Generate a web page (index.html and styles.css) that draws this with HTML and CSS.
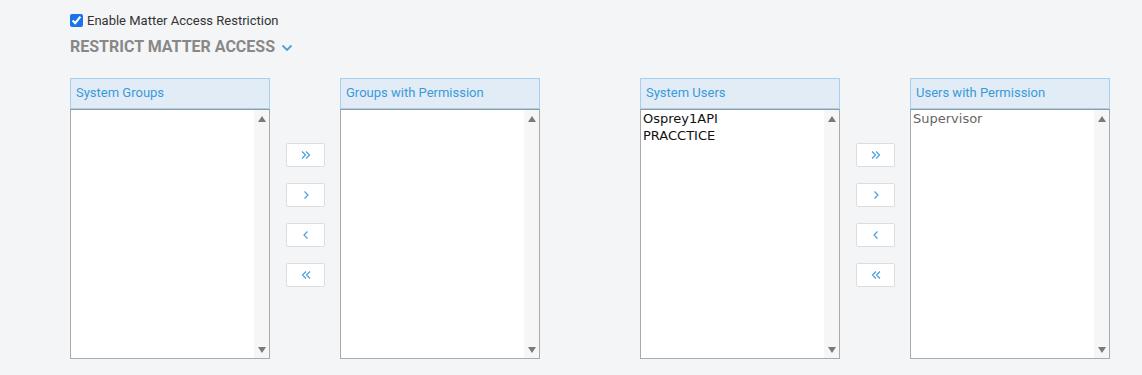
FILE: index.html
```html
<!DOCTYPE html>
<html lang="en">
<head>
    <meta charset="UTF-8">
    <title>Restrict Matter Access</title>
    <link rel="stylesheet" href="styles.css">
</head>
<body>
    <div class="page">
        <label class="enable-row">
            <input type="checkbox" checked>
            <span>Enable Matter Access Restriction</span>
        </label>

        <div class="section-title">
            RESTRICT MATTER ACCESS
            <svg class="chevron" width="12" height="8" viewBox="0 0 12 8"><path d="M1.5 1.5 L6 6 L10.5 1.5" fill="none" stroke="#4a9fdc" stroke-width="1.8"/></svg>
        </div>

        <div class="pickers">
            <div class="picker">
                <div class="list-panel">
                    <div class="list-header">System Groups</div>
                    <div class="list-body">
                        <ul class="items"></ul>
                        <div class="scroll"><span class="up"></span><span class="down"></span></div>
                    </div>
                </div>
                <div class="moves">
                    <button class="move"><svg width="14" height="12" viewBox="0 0 14 12"><path d="M3 2.5 L6.5 6 L3 9.5 M7 2.5 L10.5 6 L7 9.5" fill="none" stroke="#4a9fdc" stroke-width="1.2"/></svg></button>
                    <button class="move"><svg width="14" height="12" viewBox="0 0 14 12"><path d="M5.5 2.5 L9 6 L5.5 9.5" fill="none" stroke="#4a9fdc" stroke-width="1.2"/></svg></button>
                    <button class="move"><svg width="14" height="12" viewBox="0 0 14 12"><path d="M8.5 2.5 L5 6 L8.5 9.5" fill="none" stroke="#4a9fdc" stroke-width="1.2"/></svg></button>
                    <button class="move"><svg width="14" height="12" viewBox="0 0 14 12"><path d="M7 2.5 L3.5 6 L7 9.5 M11 2.5 L7.5 6 L11 9.5" fill="none" stroke="#4a9fdc" stroke-width="1.2"/></svg></button>
                </div>
                <div class="list-panel">
                    <div class="list-header">Groups with Permission</div>
                    <div class="list-body">
                        <ul class="items"></ul>
                        <div class="scroll"><span class="up"></span><span class="down"></span></div>
                    </div>
                </div>
            </div>

            <div class="picker">
                <div class="list-panel">
                    <div class="list-header">System Users</div>
                    <div class="list-body">
                        <ul class="items">
                            <li>Osprey1API</li>
                            <li>PRACCTICE</li>
                        </ul>
                        <div class="scroll"><span class="up"></span><span class="down"></span></div>
                    </div>
                </div>
                <div class="moves">
                    <button class="move"><svg width="14" height="12" viewBox="0 0 14 12"><path d="M3 2.5 L6.5 6 L3 9.5 M7 2.5 L10.5 6 L7 9.5" fill="none" stroke="#4a9fdc" stroke-width="1.2"/></svg></button>
                    <button class="move"><svg width="14" height="12" viewBox="0 0 14 12"><path d="M5.5 2.5 L9 6 L5.5 9.5" fill="none" stroke="#4a9fdc" stroke-width="1.2"/></svg></button>
                    <button class="move"><svg width="14" height="12" viewBox="0 0 14 12"><path d="M8.5 2.5 L5 6 L8.5 9.5" fill="none" stroke="#4a9fdc" stroke-width="1.2"/></svg></button>
                    <button class="move"><svg width="14" height="12" viewBox="0 0 14 12"><path d="M7 2.5 L3.5 6 L7 9.5 M11 2.5 L7.5 6 L11 9.5" fill="none" stroke="#4a9fdc" stroke-width="1.2"/></svg></button>
                </div>
                <div class="list-panel">
                    <div class="list-header">Users with Permission</div>
                    <div class="list-body">
                        <ul class="items granted">
                            <li>Supervisor</li>
                        </ul>
                        <div class="scroll"><span class="up"></span><span class="down"></span></div>
                    </div>
                </div>
            </div>
        </div>
    </div>
</body>
</html>
```

FILE: styles.css
```css
body {
    margin: 0;
    background-color: #f4f5f7;
    font-family: Roboto, "Liberation Sans", sans-serif;
}
.page {
    padding: 13px 0 0 70px;
}
.enable-row {
    display: flex;
    align-items: center;
    gap: 4px;
    font-size: 13px;
    color: #333;
    height: 15px;
}
.enable-row input {
    margin: 0;
    width: 13px;
    height: 13px;
    accent-color: #1a73e8;
}
.section-title {
    margin-top: 8px;
    font-size: 16px;
    font-weight: bold;
    color: #888;
    display: flex;
    align-items: center;
    gap: 6px;
    height: 20px;
}
.chevron {
    margin-top: 4px;
}
.pickers {
    display: flex;
    gap: 100px;
    margin-top: 22px;
}
.picker {
    display: flex;
    gap: 15px;
}
.list-panel {
    width: 200px;
}
.list-header {
    height: 27px;
    line-height: 27px;
    padding-bottom: 2px;
    border: 1px solid #a6d0f0;
    background-color: #e1ecf6;
    color: #3a9ad9;
    font-size: 13px;
    padding-left: 5px;
}
.list-body {
    display: flex;
    height: 248px;
    border: 1px solid #aaa;
    border-top-color: #999;
    background-color: #fff;
}
.items {
    flex: 1;
    list-style: none;
    margin: 0;
    padding: 0 2px;
    font-family: "DejaVu Sans", Verdana, sans-serif;
    font-size: 13px;
    color: #111;
    line-height: 17px;
}
.items.granted {
    color: #666;
}
.scroll {
    width: 15px;
    background-color: #f6f6f6;
    display: flex;
    flex-direction: column;
    justify-content: space-between;
    align-items: center;
    padding: 6px 0 5px;
}
.up {
    border-left: 4px solid transparent;
    border-right: 4px solid transparent;
    border-bottom: 6px solid #7a7a7a;
}
.down {
    border-left: 4px solid transparent;
    border-right: 4px solid transparent;
    border-top: 6px solid #7a7a7a;
}
.moves {
    display: flex;
    flex-direction: column;
    gap: 16px;
    padding-top: 65px;
    margin-left: 1px;
}
.move {
    width: 39px;
    height: 24px;
    padding: 0;
    background-color: #fff;
    border: 1px solid #ddd;
    border-radius: 2px;
    display: flex;
    align-items: center;
    justify-content: center;
}
```
